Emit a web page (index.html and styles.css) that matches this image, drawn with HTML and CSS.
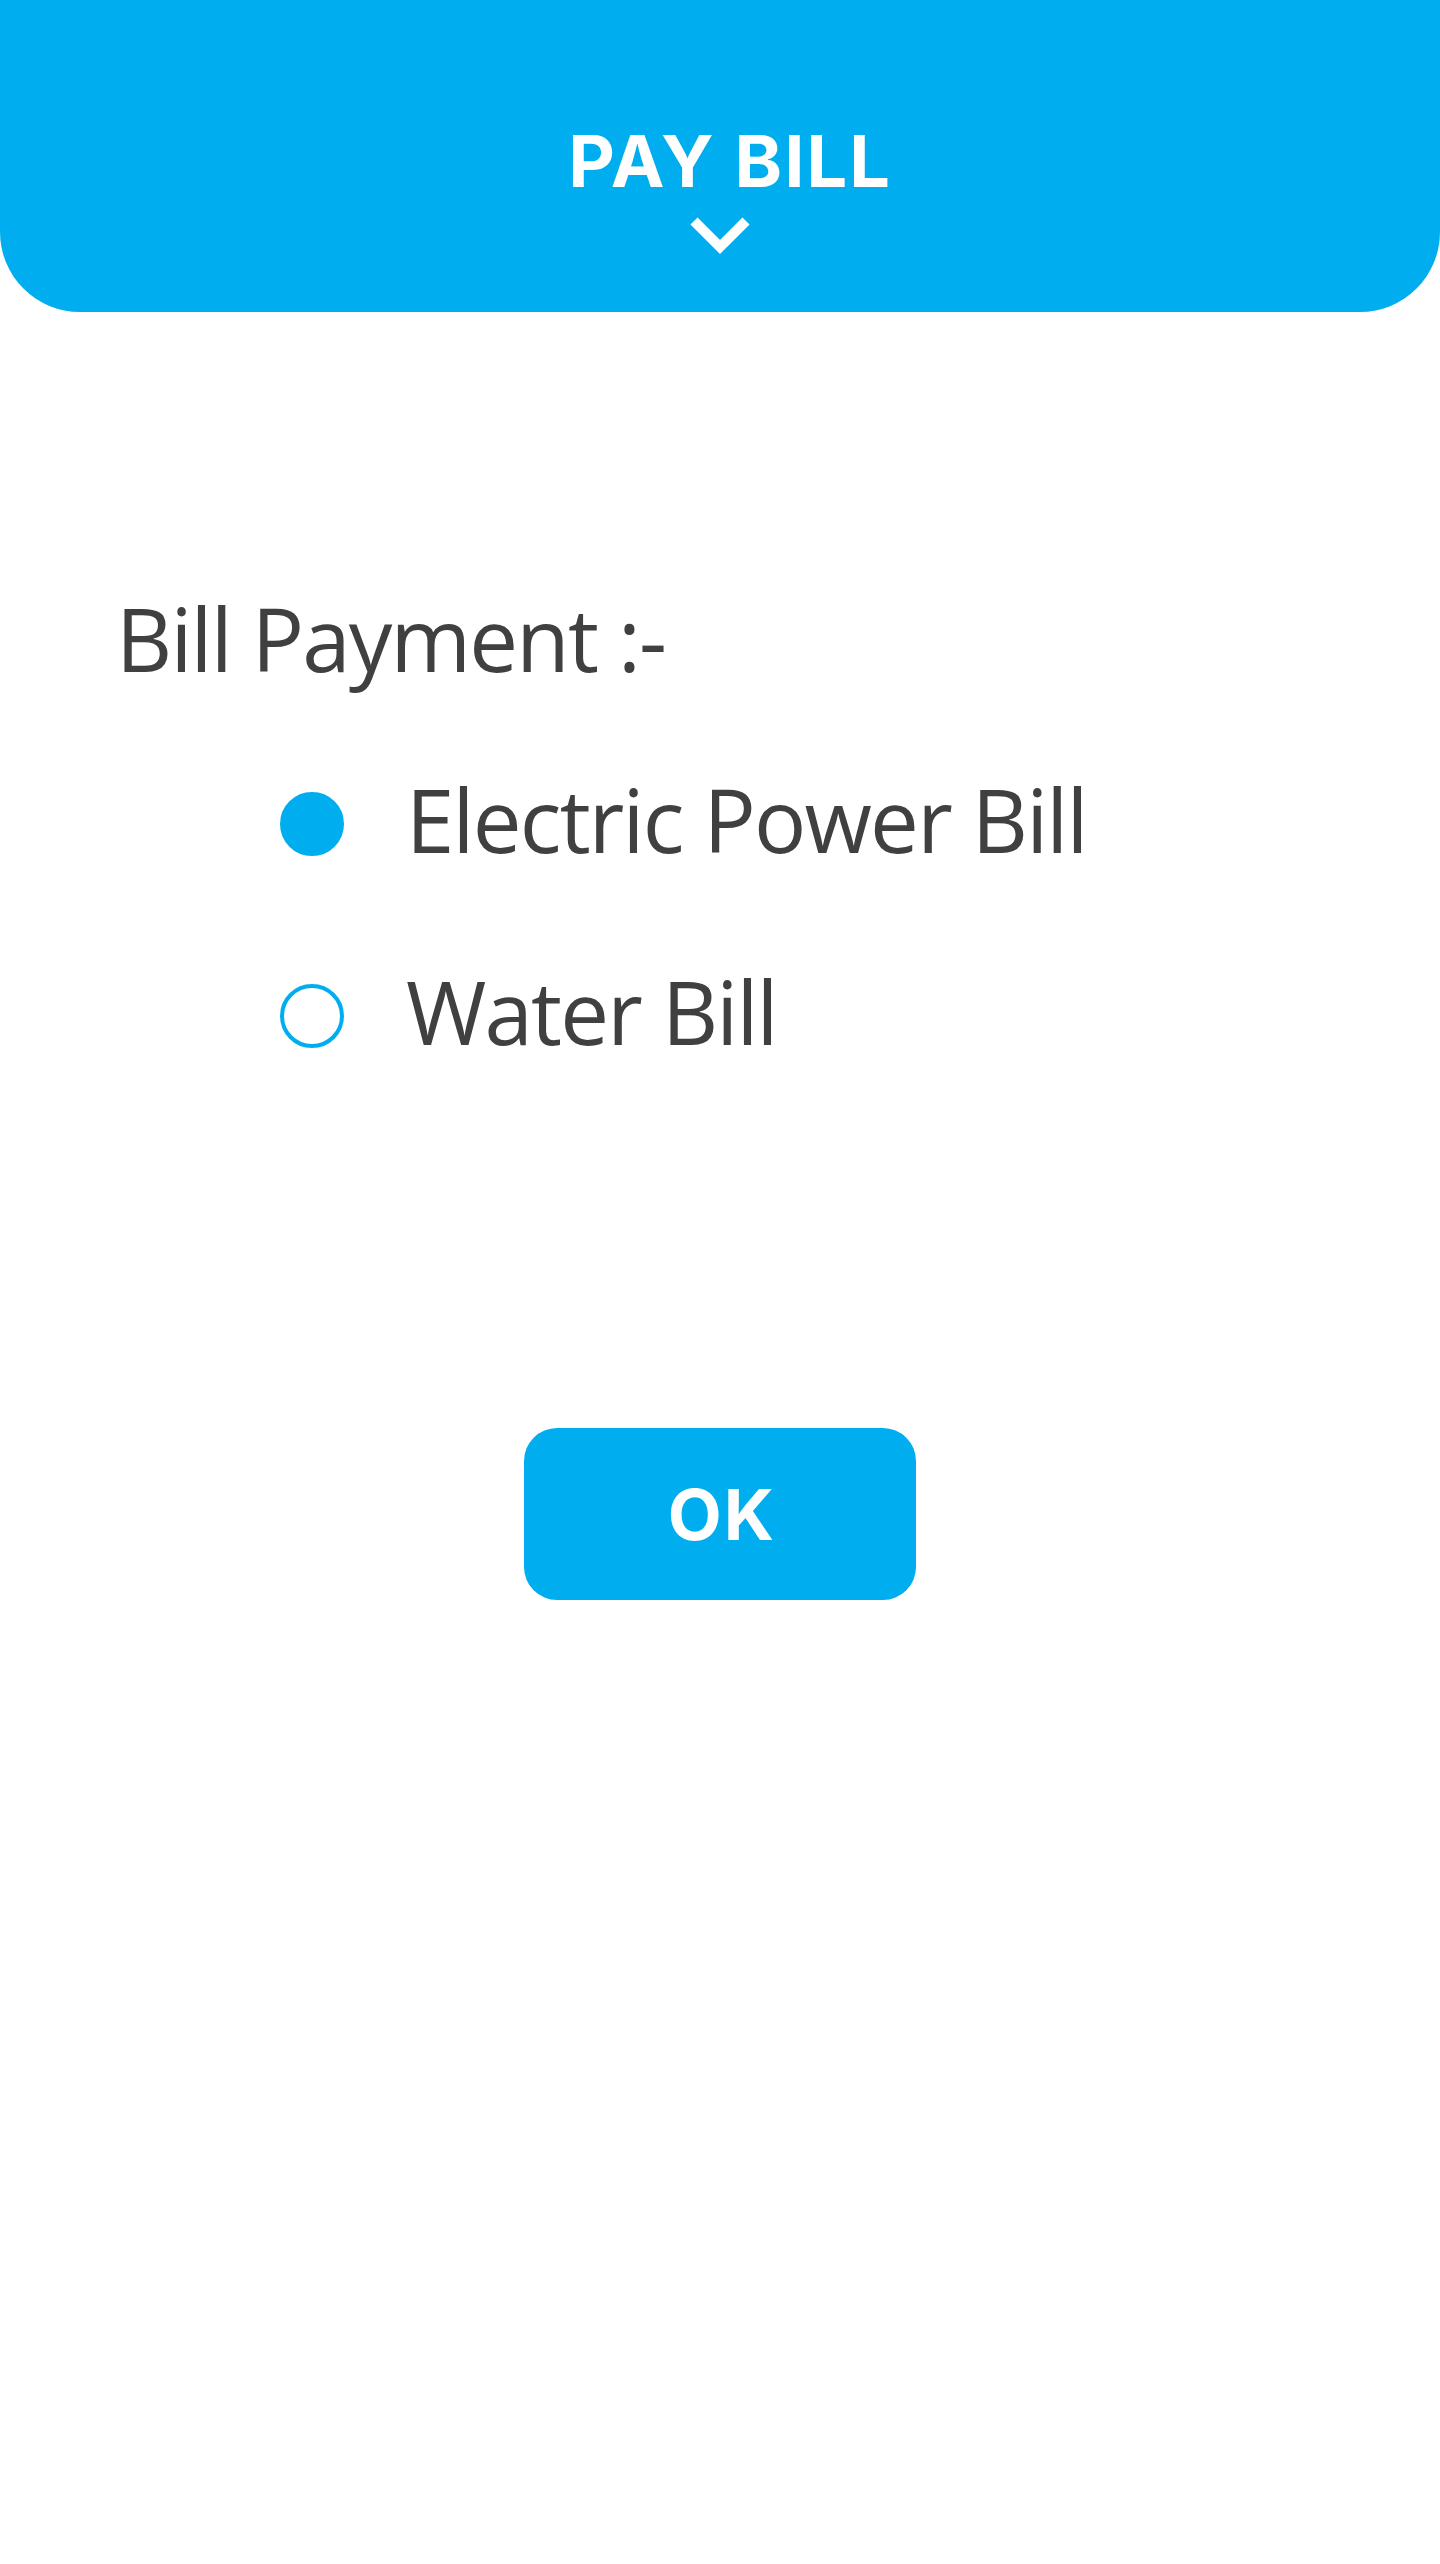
FILE: index.html
```html
<!DOCTYPE html>
<html>
<head>
<meta charset="utf-8">
<link rel="stylesheet" href="styles.css">
</head>
<body>
<header class="top">
  <h1 class="title">PAY BILL</h1>
  <svg class="chev" width="60" height="40" viewBox="0 0 60 40"><path d="M4 5 L30 31 L56 5" fill="none" stroke="#fff" stroke-width="10"/></svg>
</header>
<main class="content">
  <h2 class="heading">Bill Payment :-</h2>
  <div class="options">
    <div class="opt"><span class="radio on"></span><span class="label">Electric Power Bill</span></div>
    <div class="opt"><span class="radio"></span><span class="label">Water Bill</span></div>
  </div>
  <div class="actions"><button class="ok">OK</button></div>
</main>
</body>
</html>
```
FILE: styles.css
```css
* { box-sizing: border-box; }
body { margin: 0; background: #fff; font-family: "Open Sans", "Noto Sans", sans-serif; }
.top {
  height: 312px;
  background: #00AEEF;
  border-radius: 0 0 80px 80px;
  display: flex;
  flex-direction: column;
  align-items: center;
  padding-top: 125px;
}
.title {
  margin: 0 0 0 20px;
  font-family: Inter, "Liberation Sans", sans-serif;
  font-weight: 700;
  font-size: 72px;
  line-height: 72px;
  color: #fff;
  letter-spacing: 2px;
}
.chev { display: block; margin-top: 19px; }
.content { padding: 0 0 0 116px; }
.heading {
  margin: 283px 0 0 0;
  font-weight: 400;
  font-size: 87px;
  line-height: 87px;
  color: #404040;
  letter-spacing: -1.8px;
}
.options {
  margin-top: 110px;
  padding-left: 164px;
  display: flex;
  flex-direction: column;
  gap: 128px;
}
.opt { display: flex; align-items: center; gap: 62px; height: 64px; }
.radio {
  width: 64px; height: 64px; border-radius: 50%;
  border: 4px solid #00AEEF; flex: none;
}
.radio.on { background: #00AEEF; }
.label {
  font-size: 87px; line-height: 64px; color: #404040; margin-top: -10px;
  letter-spacing: -1.8px;
}
.actions { display: flex; justify-content: center; margin: 380px 0 0 -116px; }
.ok {
  width: 392px; height: 172px; border: 0; border-radius: 33px;
  background: #00AEEF; color: #fff;
  font-family: Inter, "Liberation Sans", sans-serif; font-weight: 700; font-size: 70px;
  letter-spacing: 2px; padding: 0 0 0 4px;
}
```
